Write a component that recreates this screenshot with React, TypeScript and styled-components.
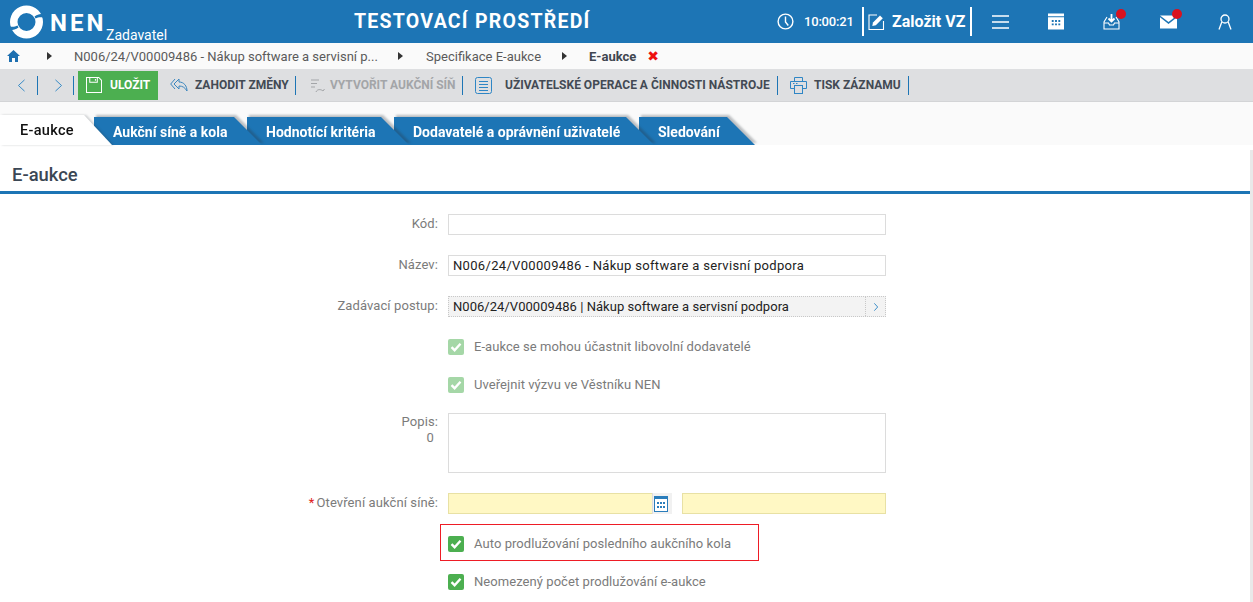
import React from "react";
import styled, { createGlobalStyle } from "styled-components";

const Global = createGlobalStyle`
  html, body { margin: 0; padding: 0; height: 100%; overflow: hidden; background: #fff; }
  * { box-sizing: border-box; }
  body { font-family: Roboto, "Liberation Sans", sans-serif; font-size: 13px; color: #333; }
`;

const Page = styled.div`width: 1253px; height: 602px; overflow: hidden; display: flex; flex-direction: column;`;

const Header = styled.header`
  height: 43px; background: #1d75b5; color: #fff; display: flex; align-items: center; flex: none;
`;
const Brand = styled.div`display: flex; align-items: flex-start; width: 330px; padding: 5px 0 0 10px; height: 43px;`;
const BrandName = styled.span`font: 700 24px/24px Roboto, sans-serif; letter-spacing: 3px; margin: 6px 0 0 7px; width: 56px;`;
const BrandRole = styled.span`font: 400 14px/16px Roboto, sans-serif; margin-top: 21.5px;`;
const Title = styled.div`width: 261px; margin-left: 24px; font: 700 19.5px/24px Roboto, sans-serif; letter-spacing: 1.25px; white-space: nowrap;`;
const HeaderRight = styled.div`margin-left: auto; display: flex; align-items: center; height: 43px;`;
const Clock = styled.div`display: flex; align-items: center; gap: 10px; font: 500 13px/16px Roboto, sans-serif; letter-spacing: -.2px; width: 85px;`;
const CreateButton = styled.div`
  display: flex; align-items: center; gap: 7px; height: 29px; width: 110px; padding-left: 4px; border-left: 2px solid #fff; border-right: 2px solid #fff;
  font: 700 16px/18px Roboto, sans-serif; white-space: nowrap;
`;
const IconSlot = styled.div<{ $w: number }>`width: ${(p) => p.$w}px; height: 17px; display: flex; justify-content: center; align-items: center; position: relative;`;
const Badge = styled.span`position: absolute; top: -4px; right: 14px; width: 10px; height: 10px; border-radius: 50%; background: #d9121f;`;

const Crumbs = styled.nav`height: 26px; background: #fafafa; display: flex; align-items: center; flex: none; font-size: 13px; padding-left: 7px;`;
const Crumb = styled.span<{ $w?: number; $strong?: boolean }>`
  ${(p) => (p.$w ? `width:${p.$w}px;` : "")} font-weight: ${(p) => (p.$strong ? 700 : 400)}; color: ${(p) => (p.$strong ? "#3f4650" : "#5a5a5a")};
  white-space: nowrap;
`;
const Arrow = styled.i<{ $l: number; $r: number }>`
  width: 0; height: 0; border-left: 5px solid #333; border-top: 4px solid transparent; border-bottom: 4px solid transparent; margin: 0 ${(p) => p.$r}px 0 ${(p) => p.$l}px;
`;
const Close = styled.span`color: #ee0f0f; font: 900 14px/14px "DejaVu Sans", sans-serif; margin-left: 11px;`;

const Toolbar = styled.div`height: 33px; background: #dedfe1; border-bottom: 1px solid #d3d4d6; display: flex; align-items: center; flex: none; padding-left: 17px;`;
const Sep = styled.i<{ $ml?: number; $mr?: number }>`width: 1px; height: 19px; background: #1d75b5; margin: 0 ${(p) => p.$mr ?? 0}px 0 ${(p) => p.$ml ?? 0}px; flex: none;`;
const ToolButton = styled.div<{ $muted?: boolean; $gap?: number; $w: number }>`
  display: flex; align-items: center; width: ${(p) => p.$w}px; gap: ${(p) => p.$gap ?? 8}px; font: 700 12px/16px Roboto, sans-serif; white-space: nowrap; flex: none;
  color: ${(p) => (p.$muted ? "#a3a5a8" : "#434a54")};
`;
const SaveButton = styled.div`
  width: 80px; height: 29px; background: #4caf50; color: #fff; display: flex; align-items: center; gap: 8px; padding-left: 8px; margin: 0 12px 0 4px; flex: none;
  font: 700 12px/16px Roboto, sans-serif;
`;

const TabStrip = styled.div`height: 43px; background: #fafafa; display: flex; align-items: flex-end; flex: none;`;
const TabShadow = styled.div<{ $z: number; $w: number; $ml?: number; $active?: boolean }>`
  position: relative; z-index: ${(p) => p.$z}; width: ${(p) => p.$w}px; margin-left: ${(p) => p.$ml ?? 0}px; flex: none;
  filter: ${(p) => (p.$active ? "drop-shadow(2px 0 1px rgba(40, 50, 60, .22))" : "drop-shadow(2px -2px 1px rgba(40, 50, 60, .3))")};
`;
const TabFace = styled.div<{ $active?: boolean; $pl: number }>`
  height: ${(p) => (p.$active ? 30 : 28)}px; background: ${(p) => (p.$active ? "#fff" : "#1d75b5")};
  color: ${(p) => (p.$active ? "#111" : "#fff")};
  clip-path: polygon(0 0, calc(100% - 28px) 0, 100% 100%, 0 100%);
  padding-left: ${(p) => p.$pl}px;
  font: ${(p) => (p.$active ? "500 14.5px/32px" : "700 14px/30px")} Roboto, sans-serif;
  letter-spacing: ${(p) => (p.$active ? ".3px" : "0")};
  white-space: nowrap;
`;

const Main = styled.main`
  flex: 1; background: #fff; display: flex; flex-direction: column; min-height: 0; position: relative;
  &::after { content: ""; position: absolute; top: 5px; right: 0; bottom: 0; width: 3px; background: #e9e9e9; }
`;
const SectionTitle = styled.h2`
  margin: 0 3px 0 0; height: 49px; border-bottom: 3px solid #1d75b5; padding: 19px 0 0 12px; font: 500 18.4px/22px Roboto, sans-serif; color: #3b4754; flex: none;
`;
const Form = styled.div`display: grid; grid-template-columns: 438px 438px; column-gap: 10px; align-content: start; padding-top: 20px;`;
const Label = styled.label<{ $mt?: number }>`
  text-align: right; color: #7b7b7b; font-size: 13px; line-height: 19px; letter-spacing: .1px; margin-top: ${(p) => p.$mt ?? 0}px;
`;
const Req = styled.span`color: #e02020; margin-right: 2px;`;
const Input = styled.div<{ $spread?: boolean }>`
  height: 21px; border: 1px solid #dcdcdc; background: #fff; margin-bottom: 20px; color: #222; padding-left: 4px; line-height: 20px; font-size: 13px;
  letter-spacing: ${(p) => (p.$spread ? ".32px" : "0")};
`;
const Lookup = styled.div`
  height: 21px; border: 1px dotted #c8c8c8; background: #f3f3f3; color: #222; display: flex; line-height: 20px; padding-left: 4px; margin-bottom: 20px; letter-spacing: .04px;
`;
const LookupBtn = styled.span`margin-left: auto; width: 20px; border-left: 1px dotted #c8c8c8; display: flex; align-items: center; justify-content: center;`;
const CheckLine = styled.div<{ $mb: number }>`grid-column: 2; display: flex; align-items: center; gap: 10px; height: 19px; margin-bottom: ${(p) => p.$mb}px; color: #7b7b7b; letter-spacing: .06px;`;
const Box = styled.span<{ $off?: boolean }>`
  width: 16px; height: 16px; border-radius: 2px; background: ${(p) => (p.$off ? "#a5d7a7" : "#4caf50")}; display: flex; align-items: center; justify-content: center; flex: none;
`;
const TextArea = styled.div`height: 60px; border: 1px solid #dcdcdc; background: #fff; margin-bottom: 20px;`;
const PopisLabel = styled(Label)`line-height: 16px;`;
const Count = styled.div`padding-right: 4px;`;
const DateRow = styled.div`display: flex; gap: 10px; margin-bottom: 10px;`;
const DateField = styled.div`width: 224px; height: 21px; border: 1px solid #e8e1a4; background: #fff8c4; display: flex; justify-content: flex-end;`;
const TimeField = styled.div`width: 204px; height: 21px; border: 1px solid #e8e1a4; background: #fff8c4;`;
const CalBtn = styled.span`width: 20px; height: 21px; margin: -1px -1px 0 0; background: #f1f1f1; border-left: 1px solid #ddd; display: flex; align-items: center; padding-left: 1px;`;
const Highlight = styled.div`
  grid-column: 2; margin-left: -8px; width: 319px; height: 37px; border: 1px solid #ee1c25; display: flex; align-items: center; gap: 10px; padding: 2px 0 0 7px; margin-bottom: 11px; color: #7b7b7b; letter-spacing: .06px;
`;

const Check = () => (
  <svg width="12" height="10" viewBox="0 0 12 10"><path d="M1.5 5.2 4.6 8.2 10.5 1.8" fill="none" stroke="#fff" strokeWidth="2.4" /></svg>
);
const Logo = () => (
  <svg width="33" height="34" viewBox="0 0 33 34">
    <path fillRule="evenodd" fill="#fff" d="M16.500 .5A16.500 16.500 0 1 1 16.500 33.500 16.500 16.500 0 1 1 16.500 .5ZM16.500 8A9 9 0 1 0 16.500 26 9 9 0 1 0 16.500 8Z" />
    <path fill="#1d75b5" d="M33 8.500C30 9 27 9.500 24.500 11.500L25.500 13.500C28 12 31 12 33 12.500ZM0 25.500C3 25 6 24.500 8.500 22.500L7.500 20.500C5 22 2 22 0 21.500Z" />
  </svg>
);
const ClockIcon = () => (
  <svg width="17" height="17" viewBox="0 0 17 17" fill="none" stroke="#fff" strokeWidth="1.4"><circle cx="8.5" cy="8.5" r="7.4" /><path d="M8.500 3.500v5.500l2.800 3.500" /></svg>
);
const EditIcon = () => (
  <svg width="17" height="17" viewBox="0 0 17 17" fill="none"><path d="M9 2H1v14.500h14.500V8" stroke="#fff" strokeWidth="1.1" /><path d="M5 9.500 12 2.500l2.800 2.800-7 7-3.500.7z" fill="#fff" /></svg>
);
const MenuIcon = () => (
  <svg width="17" height="16" viewBox="0 0 17 16" stroke="#fff" strokeWidth="1.6"><path d="M0 2h17M0 8h17M0 14h17" /></svg>
);
const CalendarWhite = () => (
  <svg width="16" height="17" viewBox="0 0 17 17"><path fill="#fff" d="M0 0h17v3H0zM0 4h17v13H0z" /><path fill="#1d75b5" d="M4 7h2v2H4zM7.500 7h2v2h-2zM11 7h2v2h-2zM4 10.500h2v2H4zM7.500 10.500h2v2h-2zM11 10.500h2v2h-2z" /></svg>
);
const InboxIcon = () => (
  <svg width="17" height="17" viewBox="0 0 17 17" fill="none" stroke="#fff" strokeWidth="1.1"><path d="M4 4 1 9v7h15V9l-3-5M1 10h4.500l1 2h4l1-2H16" /><path d="M8.500 1v7M5.500 5.500l3 3 3-3" strokeWidth="1.800" /></svg>
);
const MailIcon = () => (
  <svg width="17" height="14" viewBox="0 0 18 14"><path fill="#fff" d="M0 0h18L9 7z" /><path fill="#fff" d="M0 2l9 7 9-7v12H0z" /></svg>
);
const UserIcon = () => (
  <svg width="14" height="16" viewBox="0 0 14 16" fill="none" stroke="#fff" strokeWidth="1.3"><circle cx="7" cy="5" r="4" /><path d="M3.800 8 1 15.500M10.200 8 13 15.500" /></svg>
);
const HomeIcon = () => (
  <svg width="13" height="12" viewBox="0 0 13 12"><path fill="#1d6fb0" d="M6.500 0 13 6h-2v6H8V8H5v4H2V6H0z" /></svg>
);
const Chevron = ({ d, w = 9, h = 13, sw = 1.1 }: { d: string; w?: number; h?: number; sw?: number }) => (
  <svg width={w} height={h} viewBox="0 0 9 15" fill="none" stroke="#2f86c5" strokeWidth={sw}><path d={d} /></svg>
);
const SaveIcon = () => (
  <svg width="16" height="16" viewBox="0 0 17 17" fill="none" stroke="#fff" strokeWidth="1.1"><path d="M.5.500h13l3 3v13H.5z" /><path d="M4 .500v5h8v-5M10 2v2" /></svg>
);
const UndoIcon = () => (
  <svg width="18" height="14" viewBox="0 0 18 14" fill="none" stroke="#3a86bf" strokeWidth="1"><path d="M9 1 4 6l5 5V8c3.500 0 6 1.500 8 5 0-5-3-9-8-9z" /><path d="M5 1 .7 6 5 11" /></svg>
);
const RoomIcon = () => (
  <svg width="16" height="16" viewBox="0 0 16 16" fill="none" stroke="#a3a5a8" strokeWidth="1"><path d="M1 3h8M1 6.500h6M1 10h4M6 15c1-3 5-3 7-1M13 14l1.500-2" /></svg>
);
const ListIcon = () => (
  <svg width="17" height="17" viewBox="0 0 17 17" fill="none" stroke="#2f86c5" strokeWidth="1"><rect x=".5" y=".5" width="16" height="16" rx="2" /><path d="M4 4.500h9M4 7.500h9M4 10.500h9M4 13.500h9" /></svg>
);
const PrintIcon = () => (
  <svg width="17" height="17" viewBox="0 0 17 17" fill="none" stroke="#2f86c5" strokeWidth="1"><path d="M4.500 4V.5h8V4M.5 4.500h16v7h-4M4.500 11.500h-4v-7" /><rect x="4.500" y="8.500" width="8" height="8" /><path d="M3 6.500h1.500M6 6.500h1.500" /></svg>
);
const CalendarBlue = () => (
  <svg width="14" height="16" viewBox="0 0 14 16"><rect x=".5" y=".5" width="13" height="15" fill="#fff" stroke="#2a7dbb" /><path fill="#2a7dbb" d="M0 0h14v3H0zM3 6h2v2H3zM6 6h2v2H6zM9 6h2v2H9zM3 10h2v2H3zM6 10h2v2H6zM9 10h2v2H9z" /></svg>
);

const tabs = [
  { label: "Aukční síně a kola", w: 168, ml: -18 },
  { label: "Hodnotící kritéria", w: 162, ml: -15 },
  { label: "Dodavatelé a oprávnění uživatelé", w: 260, ml: -15 },
  { label: "Sledování", w: 116, ml: -15 },
];

export default function App() {
  return (
    <Page>
      <Global />
      <Header>
        <Brand>
          <Logo />
          <BrandName>NEN</BrandName>
          <BrandRole>Zadavatel</BrandRole>
        </Brand>
        <Title>TESTOVACÍ PROSTŘEDÍ</Title>
        <HeaderRight>
          <Clock><ClockIcon />10:00:21</Clock>
          <CreateButton><EditIcon />Založit VZ</CreateButton>
          <IconSlot $w={56}><MenuIcon /></IconSlot>
          <IconSlot $w={55}><CalendarWhite /></IconSlot>
          <IconSlot $w={57}><InboxIcon /><Badge /></IconSlot>
          <IconSlot $w={56}><MailIcon /><Badge /></IconSlot>
          <IconSlot $w={57}><UserIcon /></IconSlot>
        </HeaderRight>
      </Header>
      <Crumbs>
        <HomeIcon />
        <Arrow $l={27} $r={22} />
        <Crumb $w={324}>N006/24/V00009486 - Nákup software a servisní p...</Crumb>
        <Arrow $l={0} $r={23} />
        <Crumb $w={136}>Specifikace E-aukce</Crumb>
        <Arrow $l={0} $r={22} />
        <Crumb $strong>E-aukce</Crumb>
        <Close>✖</Close>
      </Crumbs>
      <Toolbar>
        <Chevron d="M8 1 1 7.500 8 14" />
        <Sep $ml={11} $mr={16} />
        <Chevron d="M1 1l7 6.500L1 14" />
        <Sep $ml={10} />
        <SaveButton><SaveIcon />ULOŽIT</SaveButton>
        <ToolButton $w={125} $gap={7}><UndoIcon />ZAHODIT ZMĚNY</ToolButton>
        <Sep $mr={14} />
        <ToolButton $w={152} $gap={4} $muted><RoomIcon />VYTVOŘIT AUKČNÍ SÍŇ</ToolButton>
        <Sep $mr={12} />
        <ToolButton $w={302} $gap={13}><ListIcon />UŽIVATELSKÉ OPERACE A ČINNOSTI NÁSTROJE</ToolButton>
        <Sep $mr={12} />
        <ToolButton $w={118} $gap={7}><PrintIcon />TISK ZÁZNAMU</ToolButton>
        <Sep />
      </Toolbar>
      <TabStrip>
        <TabShadow $z={9} $w={112} $active>
          <TabFace $active $pl={20}>E-aukce</TabFace>
        </TabShadow>
        {tabs.map((t, i) => (
          <TabShadow key={t.label} $z={8 - i} $w={t.w} $ml={t.ml}>
            <TabFace $pl={19}>{t.label}</TabFace>
          </TabShadow>
        ))}
      </TabStrip>
      <Main>
        <SectionTitle>E-aukce</SectionTitle>
        <Form>
          <Label>Kód:</Label>
          <Input />
          <Label>Název:</Label>
          <Input $spread>N006/24/V00009486 - Nákup software a servisní podpora</Input>
          <Label>Zadávací postup:</Label>
          <Lookup>
            N006/24/V00009486 | Nákup software a servisní podpora
            <LookupBtn><Chevron d="M2 2l5 5.500L2 13" w={6} h={10} sw={1.4} /></LookupBtn>
          </Lookup>
          <CheckLine $mb={19}><Box $off><Check /></Box>E-aukce se mohou účastnit libovolní dodavatelé</CheckLine>
          <CheckLine $mb={19}><Box $off><Check /></Box>Uveřejnit výzvu ve Věstníku NEN</CheckLine>
          <PopisLabel $mt={1}>Popis:<Count>0</Count></PopisLabel>
          <TextArea />
          <Label><Req>*</Req>Otevření aukční síně:</Label>
          <DateRow>
            <DateField><CalBtn><CalendarBlue /></CalBtn></DateField>
            <TimeField />
          </DateRow>
          <Highlight><Box><Check /></Box>Auto prodlužování posledního aukčního kola</Highlight>
          <CheckLine $mb={0}><Box><Check /></Box>Neomezený počet prodlužování e-aukce</CheckLine>
        </Form>
      </Main>
    </Page>
  );
}
